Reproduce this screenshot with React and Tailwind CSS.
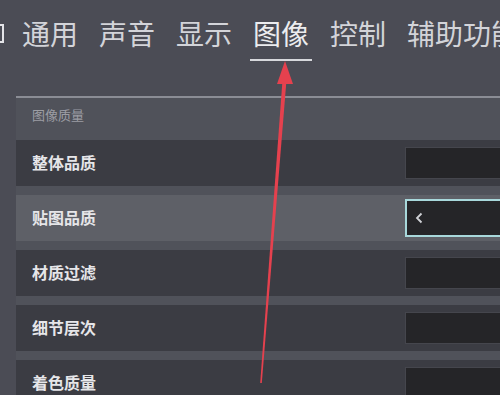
const tabs = ["通用", "声音", "显示", "图像", "控制", "辅助功能"];
const rows = ["整体品质", "贴图品质", "材质过滤", "细节层次", "着色质量"];

export default function App() {
  return (
    <div
      className="relative w-[500px] h-[395px] overflow-hidden bg-[#4b4c55]"
      style={{ fontFamily: '"Noto Sans", "Noto Sans CJK SC", sans-serif' }}
    >
      {/* left edge bracket */}
      <div className="absolute left-0 top-[24px] w-[4px] h-[19px] border-2 border-l-0 border-[#e4e4e8]" />

      {/* tabs */}
      <div className="flex gap-[21px] pl-[22px] pt-[20px] whitespace-nowrap">
        {tabs.map((t) => (
          <div key={t} className="flex flex-col">
            <span
              className={`text-[28px] leading-[28px] ${
                t === "图像" ? "text-[#ececef]" : "text-[#d3d4d9]"
              }`}
            >
              {t}
            </span>
            {t === "图像" ? (
              <div className="mt-[11px] -mx-[3px] h-[2px] bg-[#d7d8dc]" />
            ) : (
              <div className="mt-[11px] h-[2px]" />
            )}
          </div>
        ))}
      </div>

      {/* panel */}
      <div className="mt-[35px] ml-[16px] bg-[#50525a] h-[300px]">
        <div className="h-[2px] bg-[#8b8d95]" />
        <div className="pl-[16px] pt-[9px] h-[42px] text-[13px] leading-[16px] text-[#9c9da4]">
          图像质量
        </div>
        <div className="flex flex-col gap-[9px]">
          {rows.map((r, i) => (
            <div
              key={r}
              className={`flex items-center justify-between h-[46px] ${
                i === 1 ? "bg-[#5e6067]" : "bg-[#3b3c43]"
              }`}
            >
              <span className="pl-[16px] text-[16px] font-semibold text-[#e6e6e9]">{r}</span>
              {i === 1 ? (
                <div className="w-[97px] h-[38px] -mr-[2px] border-2 border-[#a8d8db] bg-[#252528] flex items-center pl-[8px]">
                  <svg width="8" height="12" viewBox="0 0 8 12">
                    <polyline points="6.5,1.5 2,6 6.5,10.5" fill="none" stroke="#d0d2d6" strokeWidth="1.8" />
                  </svg>
                </div>
              ) : (
                <div className="w-[95px] h-[32px] border border-[#45464d] border-r-0 bg-[#252528]" />
              )}
            </div>
          ))}
        </div>
      </div>

      {/* red annotation arrow */}
      <svg className="absolute inset-0 pointer-events-none" width="500" height="395" viewBox="0 0 500 395">
        <polygon points="282.5,80 286.5,80 261.8,383 260.2,383" fill="#e5414e" />
        <polygon points="285,61 293,84 277,84" fill="#e5414e" />
      </svg>
    </div>
  );
}
